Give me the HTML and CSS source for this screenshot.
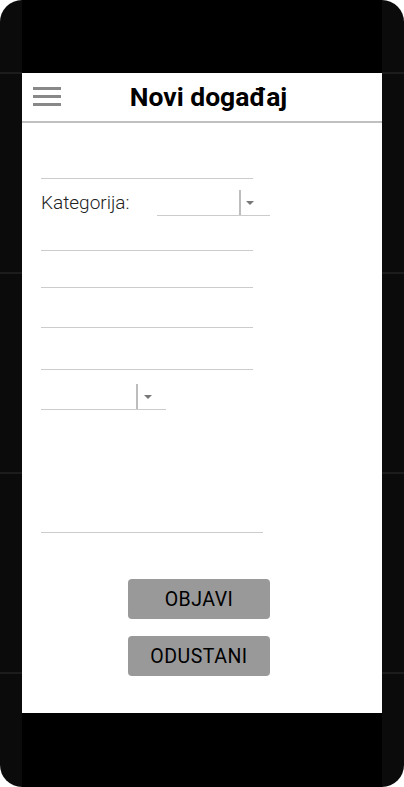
FILE: index.html
```html
<!DOCTYPE html>
<html lang="sr">
<head>
<meta charset="utf-8">
<title>Novi događaj</title>
<link rel="stylesheet" href="styles.css">
</head>
<body>
<div class="phone">
  <div class="side"></div>
  <div class="middle">
    <div class="bezel-top"></div>
    <div class="screen">
      <header class="appbar">
        <svg class="menu" width="28" height="19" viewBox="0 0 28 19" aria-hidden="true">
          <rect x="0" y="0" width="28" height="3" fill="#888"/>
          <rect x="0" y="8" width="28" height="3" fill="#888"/>
          <rect x="0" y="16" width="28" height="3" fill="#888"/>
        </svg>
        <h1 class="title">Novi događaj</h1>
      </header>
      <form class="form">
        <div class="field f1"></div>
        <div class="cat-row">
          <span class="label">Kategorija:</span>
          <div class="select sel1">
            <span class="sel-value"></span>
            <span class="sel-sep"></span>
            <span class="sel-arrow"></span>
          </div>
        </div>
        <div class="field f2"></div>
        <div class="field f3"></div>
        <div class="field f4"></div>
        <div class="field f5"></div>
        <div class="select sel2">
          <span class="sel-value"></span>
          <span class="sel-sep"></span>
          <span class="sel-arrow"></span>
        </div>
        <div class="field f6"></div>
        <div class="actions">
          <button type="button" class="btn btn-first">OBJAVI</button>
          <button type="button" class="btn">ODUSTANI</button>
        </div>
      </form>
    </div>
    <div class="bezel-bottom"></div>
  </div>
  <div class="side"></div>
</div>
</body>
</html>
```

FILE: styles.css
```css
* { box-sizing: border-box; }
html, body { margin: 0; padding: 0; background: #fff; }
body { font-family: Roboto, "Noto Sans", sans-serif; }

.phone {
  width: 404px;
  height: 787px;
  border-radius: 22px;
  overflow: hidden;
  display: grid;
  grid-template-columns: 22px 360px 22px;
  background: repeating-linear-gradient(to bottom,
    #0b0b0b 0 72px, #1c1c1c 72px 74px, #0b0b0b 74px 200px);
}

.middle { display: flex; flex-direction: column; }
.bezel-top { height: 73px; background: #000; }
.bezel-bottom { flex: 1; background: #000; }

.screen {
  height: 640px;
  background: #fff;
  display: flex;
  flex-direction: column;
}

.appbar {
  height: 50px;
  border-bottom: 2px solid #c0c0c0;
  display: flex;
  align-items: center;
  padding-left: 11px;
}
.menu { display: block; margin-top: -1px; }
.title {
  margin: 0;
  flex: 1;
  text-align: center;
  font-size: 26.5px;
  font-weight: 700;
  color: #000;
  padding-right: 26px;
  line-height: 1;
}

.form {
  padding-left: 19px;
  display: flex;
  flex-direction: column;
  align-items: flex-start;
}

.field { width: 212px; border-bottom: 1px solid #cccccc; }
.f1 { height: 56px; }
.f2 { height: 35px; }
.f3 { height: 37px; }
.f4 { height: 40px; }
.f5 { height: 42px; }
.f6 { height: 123px; width: 222px; }

.cat-row {
  display: flex;
  align-items: flex-end;
  height: 37px;
}
.label {
  font-size: 19px;
  font-weight: 300;
  color: #222;
  margin-bottom: 2px;
}

.select {
  display: flex;
  align-items: flex-end;
  border-bottom: 1px solid #cccccc;
}
.sel1 { width: 113px; height: 26px; margin-left: 27px; }
.sel1 .sel-value { width: 82px; }
.sel2 { width: 125px; height: 40px; }
.sel2 .sel-value { width: 95px; }
.sel-sep { width: 2px; height: 25px; background: #bdbdbd; }
.sel-arrow {
  align-self: center;
  margin-left: 5px;
  width: 0;
  height: 0;
  border-left: 4px solid transparent;
  border-right: 4px solid transparent;
  border-top: 4px solid #777;
}
.sel2 .sel-arrow { margin-top: 14px; margin-left: 6px; }

.actions {
  display: flex;
  flex-direction: column;
  gap: 17px;
  margin-top: 46px;
  margin-left: 87px;
}
.btn {
  width: 142px;
  height: 40px;
  border: none;
  border-radius: 4px;
  background: #999999;
  color: #000;
  font-family: Roboto, "Noto Sans", sans-serif;
  font-size: 19.5px;
  letter-spacing: 0.5px;
  padding: 0;
}
```
